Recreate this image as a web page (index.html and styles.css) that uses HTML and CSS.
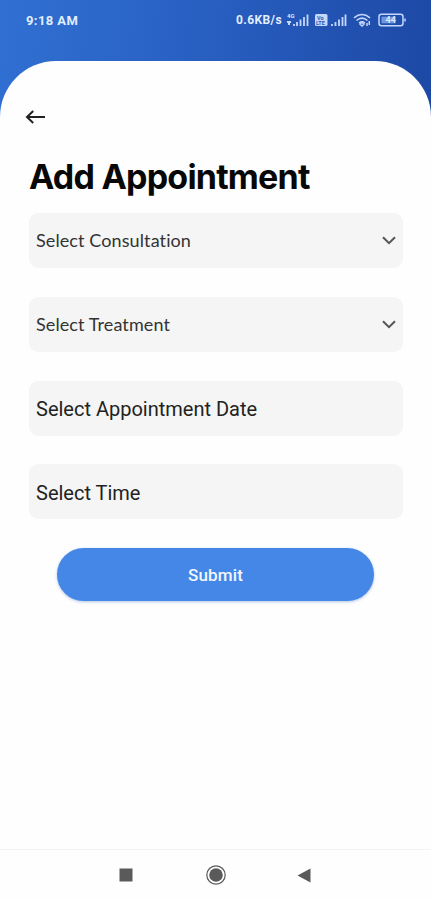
FILE: index.html
```html
<!DOCTYPE html>
<html lang="en">
<head>
<meta charset="utf-8">
<title>Add Appointment</title>
<link rel="stylesheet" href="styles.css">
</head>
<body>
<header class="status">
  <span class="clock">9:18 AM</span>
  <div class="indicators">
    <span class="speed">0.6KB/s</span>
    <svg class="signal" width="24" height="14" viewBox="0 0 24 14"><text x="1" y="5" class="tiny">4G</text><path d="M1 9h4M2 11h2M8 11v2M11 9v4M14.500 6.500v6.500M18 4v9M21.500 1.500v11.500"/></svg>
    <svg class="sim" width="33" height="14" viewBox="0 0 33 14"><rect x="1" y="1" width="12.500" height="12" rx="1.500"/><text x="3" y="6.800" class="badge">Vo</text><text x="2" y="12" class="badge">LTE</text><path d="M18 11v2M21.500 9v4M25 6.500v6.500M28.500 4v9M31.500 1.500v11.500"/></svg>
    <svg class="wifi" width="18" height="14" viewBox="0 0 18 14"><path d="M1 4.800q8-6.500 16 0M3.500 7.500q5.500-4.700 11 0M6 10q3-2.500 6 0"/><path d="M9 9.500l2 1.500-2 2-2-2zM14 13v-3M16.300 8v4"/></svg>
    <svg class="battery" width="29" height="14" viewBox="0 0 29 14"><rect x="1" y="1.200" width="24" height="11.600" rx="2.500"/><path d="M27 5.500v3"/><rect class="charge" x="3.500" y="3.700" width="14" height="6.600"/><text x="7.500" y="10.300">44</text></svg>
  </div>
</header>
<main class="sheet">
  <button class="back" aria-label="Back"><svg width="22" height="16" viewBox="0 0 22 16"><path d="M21 8H3.500M9.200 2L3 8l6.200 6"/></svg></button>
  <h1>Add Appointment</h1>
  <form class="fields">
    <div class="field picker consultation"><span>Select Consultation</span><svg width="14" height="9" viewBox="0 0 14 9"><path d="M1 1.200l6 6 6-6"/></svg></div>
    <div class="field picker treatment"><span>Select Treatment</span><svg width="14" height="9" viewBox="0 0 14 9"><path d="M1 1.200l6 6 6-6"/></svg></div>
    <div class="field date"><span>Select Appointment Date</span></div>
    <div class="field time"><span>Select Time</span></div>
    <button type="button" class="submit">Submit</button>
  </form>
</main>
<nav class="system-nav">
  <svg width="14" height="14" viewBox="0 0 14 14"><rect x=".5" y=".5" width="13" height="13"/></svg>
  <svg width="22" height="22" viewBox="0 0 22 22"><circle class="ring" cx="11" cy="11" r="9.200"/><circle cx="11" cy="11" r="6.800"/></svg>
  <svg width="14" height="15" viewBox="0 0 14 15"><path d="M13.500.5v14L.5 7.500z"/></svg>
</nav>
</body>
</html>
```
FILE: styles.css
```css
* { box-sizing: border-box; }
body {
  margin: 0;
  height: 900px;
  display: flex;
  flex-direction: column;
  overflow: hidden;
  font-family: Roboto, sans-serif;
  background: linear-gradient(97deg, #3070d2 0, #2860c2 45%, #1d48a5 100%) 0 0 / 100% 130px no-repeat #fefefe;
}
button { border: 0; padding: 0; }
.status {
  height: 61px;
  flex: none;
  display: flex;
  justify-content: space-between;
  align-items: flex-start;
  padding: 13px 24px 0 26px;
  color: #e2edff;
}
.clock { font-size: 13px; font-weight: 700; line-height: 15px; letter-spacing: .4px; }
.indicators { display: flex; align-items: center; height: 14px; }
.speed { font-size: 12px; font-weight: 700; line-height: 14px; letter-spacing: .4px; margin-right: 4px; }
.indicators svg { fill: none; stroke: #c3d8fc; stroke-width: 1.8; }
.indicators text { fill: #d9e7ff; stroke: none; font-size: 9px; font-weight: 700; }
.indicators .tiny { font-size: 6px; }
.indicators .sim rect { fill: #c3d8fc; stroke: none; }
.indicators .badge { font-size: 5.5px; fill: #2859b5; }
.indicators .charge { fill: #7198da; stroke: none; }
.sim { margin-left: 4px; }
.wifi { margin-left: 6px; }
.battery { margin-left: 7px; }
.indicators .wifi, .indicators .battery { stroke-width: 1.5; }
.sheet {
  flex: 1;
  background: #fefefe;
  border-radius: 56px 56px 0 0;
  padding: 48px 28px 0 29px;
}
.back { display: block; width: 22px; height: 16px; margin-left: -5px; background: none; }
.back svg { display: block; fill: none; stroke: #222; stroke-width: 2; }
h1 {
  margin: 32px 0 0;
  height: 40px;
  font: 650 34px/40px Inter, sans-serif;
  letter-spacing: -.78px;
  color: #080808;
  white-space: nowrap;
}
.fields { display: grid; gap: 28.8px; margin-top: 16px; }
.field {
  height: 55px;
  display: flex;
  align-items: center;
  justify-content: space-between;
  padding: 0 7px;
  border-radius: 9px;
  background: #f5f5f5;
  color: #222;
  font-size: 20px;
}
.date, .time { padding-top: 2px; }
.picker { font-family: Lato, sans-serif; font-size: 18px; letter-spacing: .1px; color: #333; }
.picker span { padding-bottom: 1px; }
.picker svg { fill: none; stroke: #555; stroke-width: 2; }
.submit {
  justify-self: center;
  width: 317px;
  height: 53px;
  margin-left: -1px;
  border-radius: 27px;
  background: #4587e6;
  box-shadow: 0 1px 3px #3b71bd66;
  color: #f1f6ff;
  font: 500 17px/53px Roboto, sans-serif;
  letter-spacing: .15px;
  padding-top: 1px;
}
.system-nav {
  height: 51px;
  flex: none;
  display: grid;
  grid-template-columns: 14px 22px 14px;
  column-gap: 71px;
  justify-content: center;
  align-items: center;
  border-top: 1px solid #f3f3f3;
  background: #fefefe;
}
.system-nav svg { fill: #5a5a5a; }
.system-nav svg:first-child, .system-nav svg:last-child { margin-left: -1px; }
.system-nav .ring { fill: none; stroke: #5a5a5a; stroke-width: 1.2; }
```
